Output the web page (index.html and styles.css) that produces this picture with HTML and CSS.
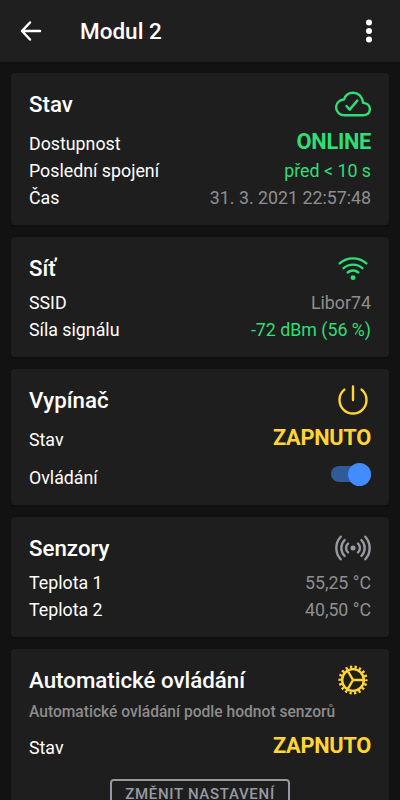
FILE: index.html
```html
<!DOCTYPE html>
<html lang="cs">
<head>
  <meta charset="UTF-8">
  <meta name="viewport" content="width=device-width, initial-scale=1.0">
  <title>Modul 2</title>
  <link rel="stylesheet" href="styles.css">
</head>
<body>
  <header class="toolbar">
    <button class="icon-btn" aria-label="Zpět">
      <svg class="back" viewBox="0 0 24 24"><path d="M11 3.500L3 12l8 8.500M3.500 12H21"/></svg>
    </button>
    <h1>Modul 2</h1>
    <button class="icon-btn" aria-label="Menu">
      <svg class="dots" viewBox="0 0 24 24"><circle cx="12" cy="3.400" r="3"/><circle cx="12" cy="12" r="3"/><circle cx="12" cy="20.600" r="3"/></svg>
    </button>
  </header>

  <main class="content">
    <section class="card">
      <div class="card-header">
        <h2>Stav</h2>
        <svg class="icon success" viewBox="0 0 512 512">
          <path d="M400 240c-8.890-89.540-71-144-144-144-69 0-113.440 48.200-128 96-60 6-112 43.590-112 112 0 66 54 112 120 112h260c55 0 100-27.440 100-88 0-59.820-53-85.760-96-88z"/>
          <path d="M317 208L209.200 336 163 284.800"/>
        </svg>
      </div>
      <div class="row"><span>Dostupnost</span><strong class="success">ONLINE</strong></div>
      <div class="row"><span>Poslední spojení</span><span class="success">před &lt; 10 s</span></div>
      <div class="row"><span>Čas</span><span class="medium">31. 3. 2021 22:57:48</span></div>
    </section>

    <section class="card">
      <div class="card-header">
        <h2>Síť</h2>
        <svg class="icon success" viewBox="0 0 512 512">
          <path d="M66 190a290 290 0 01380 0M122 258a203 203 0 01268 0M180 320a116 116 0 01152 0"/>
          <circle class="fill" cx="256" cy="393" r="35"/>
        </svg>
      </div>
      <div class="row"><span>SSID</span><span class="medium">Libor74</span></div>
      <div class="row"><span>Síla signálu</span><span class="success">-72 dBm (56 %)</span></div>
    </section>

    <section class="card">
      <div class="card-header">
        <h2>Vypínač</h2>
        <svg class="icon warning" viewBox="0 0 512 512">
          <path d="M378 108a191.410 191.410 0 0170 148c0 106-86 192-192 192S64 362 64 256a192 192 0 0169-148M256 64v192"/>
        </svg>
      </div>
      <div class="row"><span>Stav</span><strong class="warning">ZAPNUTO</strong></div>
      <div class="row toggle-row"><span>Ovládání</span><span class="toggle"><span class="knob"></span></span></div>
    </section>

    <section class="card">
      <div class="card-header">
        <h2>Senzory</h2>
        <svg class="icon gray" viewBox="0 0 512 512">
          <circle class="fill" cx="256" cy="256" r="36"/>
          <path d="M327 194a83 83 0 010 124M375 142a162 162 0 010 228M431 95a240 240 0 010 322"/>
          <path d="M185 194a83 83 0 000 124M137 142a162 162 0 000 228M81 95a240 240 0 000 322"/>
        </svg>
      </div>
      <div class="row"><span>Teplota 1</span><span class="medium">55,25 °C</span></div>
      <div class="row"><span>Teplota 2</span><span class="medium">40,50 °C</span></div>
    </section>

    <section class="card">
      <div class="card-header">
        <h2>Automatické ovládání</h2>
        <svg class="icon warning" viewBox="0 0 512 512">
          <circle cx="256" cy="256" r="154"/>
          <circle class="teeth" cx="256" cy="256" r="186" pathLength="36"/>
          <path d="M256 256h154M256 256l-77-133.400M256 256l-77 133.400"/>
        </svg>
      </div>
      <p class="subtitle">Automatické ovládání podle hodnot senzorů</p>
      <div class="row"><span>Stav</span><strong class="warning">ZAPNUTO</strong></div>
      <button class="outline-btn">Změnit nastavení</button>
    </section>
  </main>
</body>
</html>
```
FILE: styles.css
```css
* {
  box-sizing: border-box;
}
body {
  margin: 0;
  height: 800px;
  overflow: hidden;
  background: #121212;
  color: #fff;
  font-family: Roboto, "Noto Sans", sans-serif;
  font-size: 17.8px;
  line-height: 27px;
}
h1, h2, p {
  margin: 0;
}
.toolbar {
  display: flex;
  align-items: center;
  height: 62px;
  padding: 0 17px;
  background: #1f1f1f;
}
.toolbar h1 {
  flex: 1;
  margin-left: 35px;
  font-size: 22.5px;
  font-weight: 500;
}
.icon-btn {
  display: flex;
  justify-content: center;
  width: 28px;
  padding: 0;
  border: none;
  background: none;
}
.back {
  width: 24px;
  height: 24px;
  fill: none;
  stroke: #fff;
  stroke-width: 2.5;
  stroke-linecap: round;
  stroke-linejoin: round;
}
.dots {
  width: 24px;
  height: 24px;
  fill: #fff;
}
.content {
  display: flex;
  flex-direction: column;
  gap: 12px;
  padding: 11px;
}
.card {
  padding: 14px 18px;
  border-radius: 4px;
  background: #1e1e1e;
  box-shadow: 0 2px 2px rgba(0, 0, 0, 0.2);
}
.card-header {
  display: flex;
  justify-content: space-between;
  align-items: center;
  height: 34px;
  margin-bottom: 4px;
}
.card-header h2 {
  margin-top: 1px;
  font-size: 22.3px;
  font-weight: 500;
}
.icon {
  width: 36px;
  height: 36px;
  fill: none;
  stroke: currentColor;
  stroke-width: 34;
  stroke-linecap: round;
  stroke-linejoin: round;
}
.icon .fill {
  fill: currentColor;
  stroke: none;
}
.icon .teeth {
  stroke-width: 42;
  stroke-linecap: butt;
  stroke-dasharray: 1 1;
  stroke-dashoffset: 0.5;
}
.row {
  display: flex;
  justify-content: space-between;
  align-items: flex-end;
}
.row strong {
  margin-top: 2px;
  font-size: 21.8px;
  font-weight: 700;
  line-height: 30px;
  letter-spacing: -0.3px;
}
.toggle-row {
  height: 38px;
}
.toggle {
  display: flex;
  align-items: center;
  justify-content: flex-end;
  width: 40px;
  height: 16px;
  margin-bottom: 9px;
  border-radius: 8px;
  background: #315a99;
}
.knob {
  flex: none;
  width: 23px;
  height: 23px;
  border-radius: 50%;
  background: #428cff;
}
.subtitle {
  margin: -2px 0 3px;
  color: #8c8c8c;
  font-size: 15.6px;
  font-weight: 500;
}
.outline-btn {
  display: block;
  width: 180px;
  height: 30px;
  margin: 18px auto 0;
  padding: 0;
  border: 2px solid #989aa2;
  border-radius: 4px;
  background: none;
  color: #989aa2;
  font: 500 15px Roboto, sans-serif;
  letter-spacing: 0.7px;
  text-transform: uppercase;
}
.success {
  color: #2fdf75;
}
.warning {
  color: #ffd534;
}
.medium {
  color: #8f8f8f;
}
.gray {
  color: #989aa2;
}
```
